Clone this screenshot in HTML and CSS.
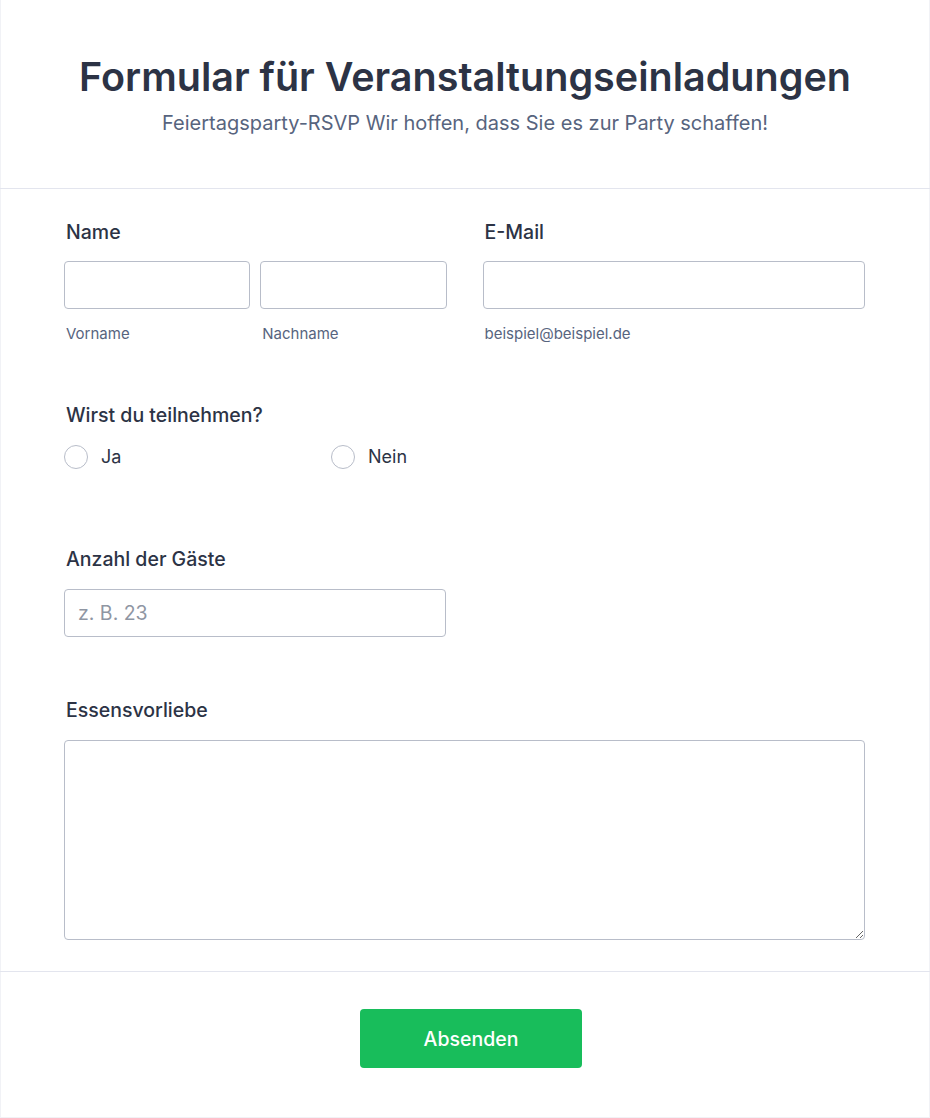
FILE: index.html
```html
<!DOCTYPE html>
<html lang="de">

<head>
  <meta charset="UTF-8">
  <meta name="viewport" content="width=device-width, initial-scale=1.0">
  <title>Formular für Veranstaltungseinladungen</title>
  <link rel="stylesheet" href="styles.css">
</head>

<body>
  <div class="card">
    <div class="header">
      <h1>Formular für Veranstaltungseinladungen</h1>
      <p class="subtitle">Feiertagsparty-RSVP Wir hoffen, dass Sie es zur Party schaffen!</p>
    </div>

    <form class="form" onsubmit="return false">
      <div class="row two-cols">
        <div class="field">
          <label class="label" for="firstName">Name</label>
          <div class="name-inputs">
            <div>
              <input type="text" id="firstName" class="input">
              <div class="sublabel">Vorname</div>
            </div>
            <div>
              <input type="text" id="lastName" class="input">
              <div class="sublabel">Nachname</div>
            </div>
          </div>
        </div>
        <div class="field">
          <label class="label" for="email">E-Mail</label>
          <input type="email" id="email" class="input">
          <div class="sublabel">beispiel@beispiel.de</div>
        </div>
      </div>

      <div class="row attend">
        <div class="label">Wirst du teilnehmen?</div>
        <div class="radios">
          <label class="radio"><input type="radio" name="attend" value="ja"><span>Ja</span></label>
          <label class="radio"><input type="radio" name="attend" value="nein"><span>Nein</span></label>
        </div>
      </div>

      <div class="row guests">
        <div class="field half">
          <label class="label" for="guests">Anzahl der Gäste</label>
          <input type="number" id="guests" class="input" placeholder="z. B. 23">
        </div>
      </div>

      <div class="row food">
        <label class="label" for="food">Essensvorliebe</label>
        <textarea id="food" class="textarea"></textarea>
      </div>
    </form>

    <div class="footer">
      <button type="submit" class="submit">Absenden</button>
    </div>
  </div>
</body>

</html>
```

FILE: styles.css
```css
body {
  margin: 0;
  font-family: Inter, "Noto Sans", sans-serif;
  color: #2c3345;
  background: #fff;
}

.card {
  width: 930px;
  min-height: 1118px;
  box-sizing: border-box;
  box-shadow: inset 1px 0 #f1f2f6, inset -1px 0 #f1f2f6, inset 0 -1px #f1f2f6;
}

.header {
  text-align: center;
  padding: 53px 20px 53px;
  border-bottom: 1px solid #e3e5ee;
}

.header h1 {
  margin: 0;
  font-size: 39.5px;
  line-height: 48px;
  font-weight: 600;
  color: #2c3345;
}

.subtitle {
  margin: 10px 0 0;
  font-size: 20px;
  line-height: 24px;
  color: #57647e;
}

.form {
  padding: 31px 65px 31px 64px;
  border-bottom: 1px solid #e3e5ee;
}

.two-cols {
  display: grid;
  grid-template-columns: 1fr 1fr;
  column-gap: 36px;
}

.name-inputs {
  display: grid;
  grid-template-columns: 1fr 1fr;
  column-gap: 10px;
}

.label {
  display: block;
  padding-left: 2px;
  margin-bottom: 17px;
  font-size: 19.5px;
  line-height: 24px;
  font-weight: 500;
  color: #2c3345;
}

.input,
.textarea {
  display: block;
  width: 100%;
  box-sizing: border-box;
  border: 1px solid #b8bdc9;
  border-radius: 4px;
  font-family: inherit;
  font-size: 19.5px;
  color: #2c3345;
  background: #fff;
}

.input {
  height: 48px;
  padding: 0 13px;
}

.input::placeholder {
  color: #8f96a3;
}

.input::-webkit-outer-spin-button,
.input::-webkit-inner-spin-button {
  -webkit-appearance: none;
  margin: 0;
}

.sublabel {
  margin-top: 16px;
  padding-left: 2px;
  font-size: 15px;
  line-height: 18px;
  color: #57647e;
}

.attend {
  margin-top: 60px;
}

.attend .label {
  margin-bottom: 18px;
}

.radios {
  display: grid;
  grid-template-columns: 267px 267px;
}

.radio {
  display: flex;
  align-items: center;
  gap: 13px;
  font-size: 18px;
  line-height: 24px;
  color: #2c3345;
  cursor: pointer;
}

.radio input {
  appearance: none;
  -webkit-appearance: none;
  width: 24px;
  height: 24px;
  margin: 0;
  border: 1px solid #b8bdc9;
  border-radius: 50%;
  background: #fff;
}

.radio input:checked {
  border: 7px solid #18bd5b;
}

.guests {
  margin-top: 78px;
}

.half {
  width: 382px;
}

.guests .label,
.food .label {
  margin-bottom: 18px;
}

.food {
  margin-top: 61px;
}

.textarea {
  height: 200px;
  padding: 10px 13px;
}

.footer {
  display: flex;
  justify-content: center;
  padding: 37px 0 49px 12px;
}

.submit {
  width: 222px;
  height: 59px;
  border: none;
  border-radius: 4px;
  background: #18bd5b;
  color: #fff;
  font-family: inherit;
  font-size: 19.5px;
  font-weight: 500;
  cursor: pointer;
}

.submit:hover {
  background: #16aa52;
}
```
